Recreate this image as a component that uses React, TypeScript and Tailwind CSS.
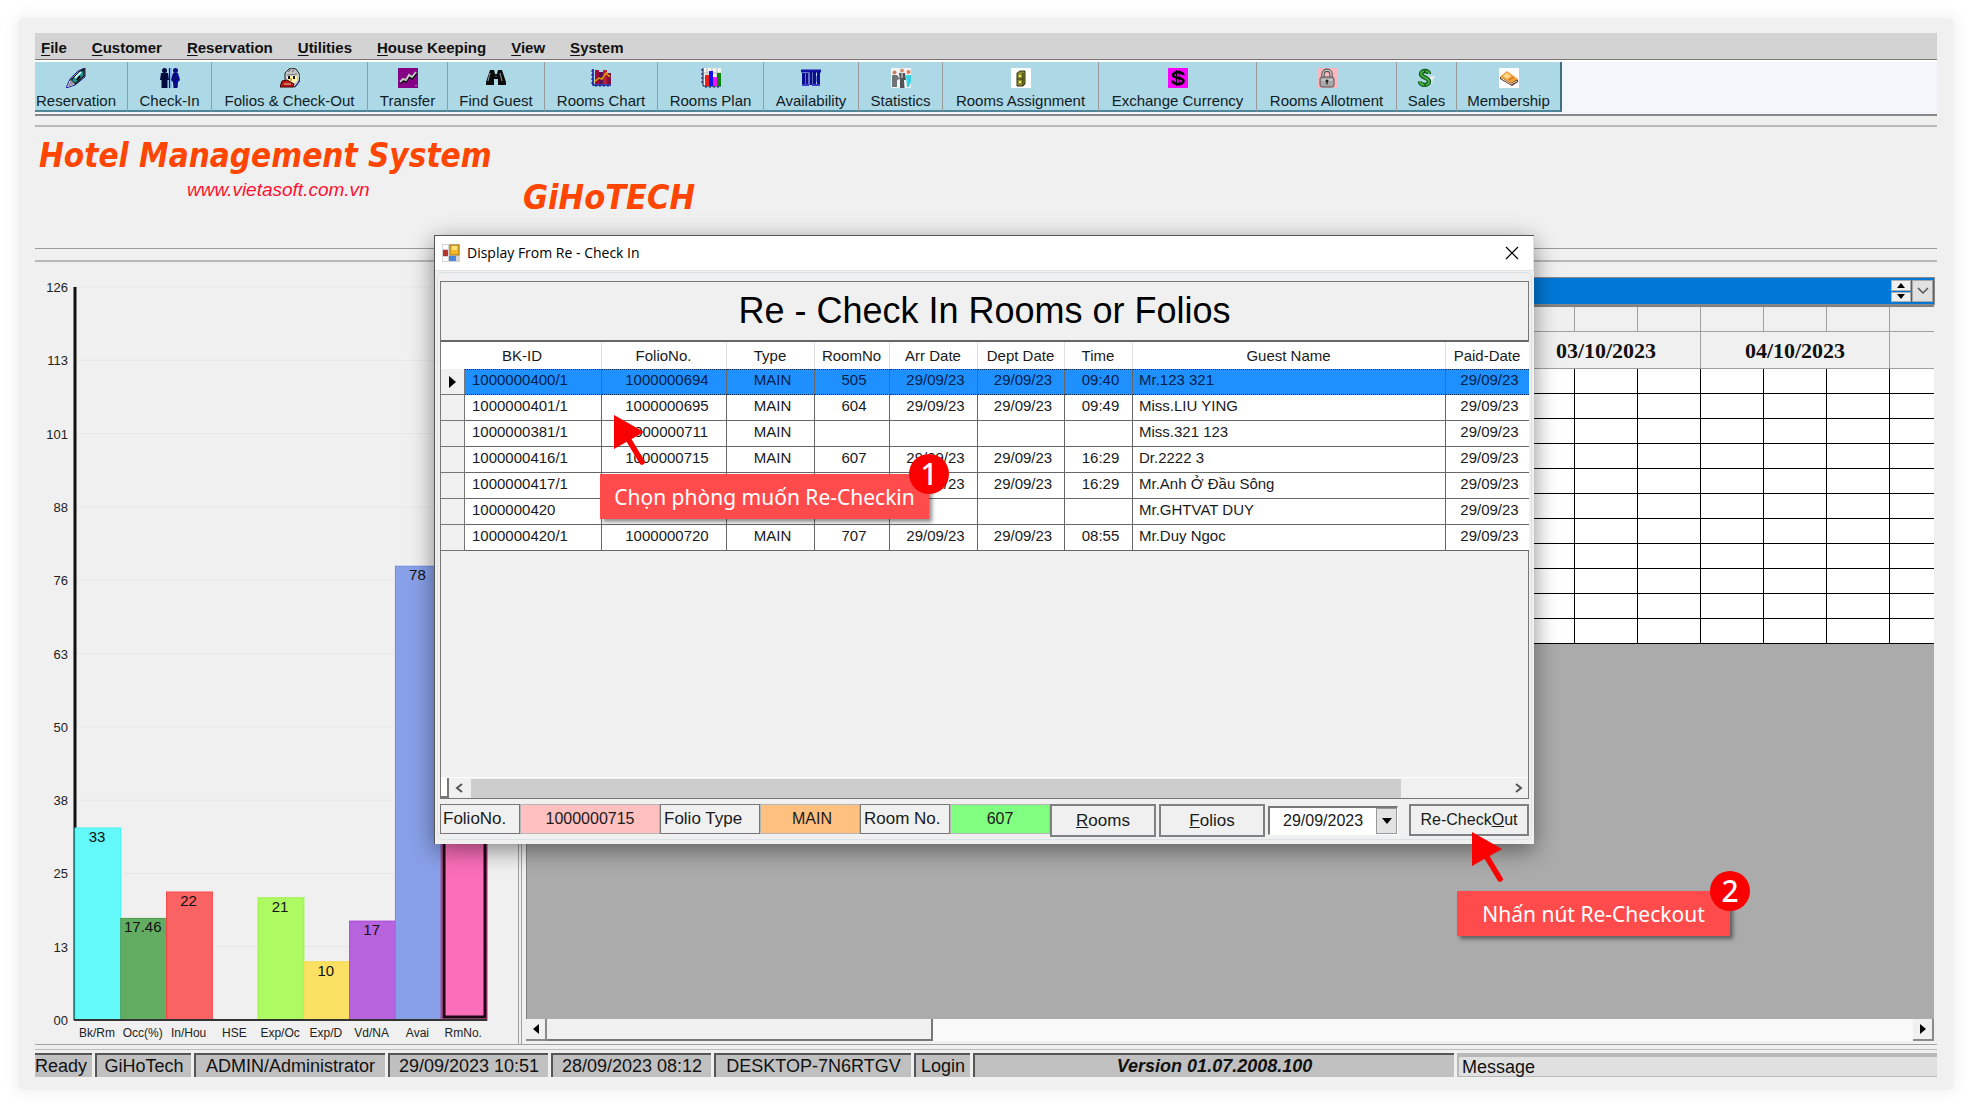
import React from "react";

type MenuEntry = { key: string; rest: string };

const menus: MenuEntry[] = [
  { key: "F", rest: "ile" },
  { key: "C", rest: "ustomer" },
  { key: "R", rest: "eservation" },
  { key: "U", rest: "tilities" },
  { key: "H", rest: "ouse Keeping" },
  { key: "V", rest: "iew" },
  { key: "S", rest: "ystem" },
];

const Pen = () => (
  <>
    <path d="M19 0 L19 9 L9 17 L6 18 L0 20 L4 11 L12 3 Z" fill="#fff" stroke="#1a1a9c" strokeWidth="1" />
    <path d="M18 1 L18 8 L9 16 L5 12 L13 4 Z" fill="#1f9494" stroke="#111" strokeWidth="1.500" />
    <path d="M15 4 L9 10" stroke="#c8ffff" strokeWidth="2" />
    <path d="M14 8 L11 12" stroke="#000" strokeWidth="2" />
    <path d="M5 12 L9 16 L1 19 Z" fill="#9898ac" />
  </>
);

const People = () => (
  <>
    <circle cx="4.500" cy="2.500" r="2.500" fill="#000a3c" />
    <path d="M1 5 H8 L9 12 H7.500 V20 H1.500 V12 H0 Z" fill="#000a3c" />
    <path d="M9.500 0 V20" stroke="#0606c8" strokeWidth="1.200" />
    <path d="M11 0 V20" stroke="#5f9ff0" strokeWidth="1" />
    <circle cx="15.500" cy="2.500" r="2.500" fill="#0a0a78" />
    <path d="M13 5 H18 L20 12 L18 14 L17.500 20 H13.500 L13 14 L11 12 Z" fill="#0a0a78" />
    <path d="M16 6 L19 10 M17 12 L15 17" stroke="#0808d8" strokeWidth="1" />
  </>
);

const Clerk = () => (
  <>
    <path d="M5 5 L10 0 L16 1 L20 7 L19 14 L15 19 L8 18 L5 13 Z" fill="#c9c9c9" stroke="#222" strokeWidth="1" />
    <path d="M8 4 L11 1 M12 4 L14 2 M7 7 L17 6" stroke="#777" strokeWidth="1.200" />
    <path d="M7 8 H17 V13 L12 17 L7 14 Z" fill="#fff3a8" />
    <rect x="8" y="8" width="2" height="3" fill="#111" />
    <rect x="13" y="8" width="2" height="3" fill="#111" />
    <path d="M11 10 V13" stroke="#b27300" />
    <path d="M0 19 L2 13 L7 12 L14 16 L13 19 Z" fill="#b81818" stroke="#400" strokeWidth="1" />
    <path d="M4 16 H11" stroke="#f4c0a0" />
    <path d="M15 19 L20 12" stroke="#1a1ab4" />
  </>
);

const TrendIcon = () => (
  <>
    <rect width="20" height="20" fill="#840084" />
    <path d="M2 15 L5 12 L8 13 L11 8 L14 10 L18 5" fill="none" stroke="#000" strokeWidth="3" />
    <path d="M2 14 L5 11 L8 12 L11 7 L14 9 L18 4" fill="none" stroke="#c8c8c8" strokeWidth="2" />
    <rect x="17" y="17" width="2" height="1" fill="#d070d0" />
  </>
);

const Binoculars = () => (
  <>
    <path d="M4 2 H8 L9 6 H11 L12 2 H16 L20 14 V17 H12 V11 H8 V17 H0 V14 Z" fill="#0c0c0c" />
    <path d="M4 5 L2 13 M14 5 L16 13" stroke="#8aa0a8" strokeWidth="1" />
    <path d="M9 8 H11" stroke="#456" />
  </>
);

const RoomsChart = () => (
  <>
    <path d="M2 1 V17 H20" fill="none" stroke="#101094" strokeWidth="1.500" />
    <path d="M0 3 H2 M0 7 H2 M0 11 H2 M0 15 H2 M5 17 V19 M9 17 V19 M13 17 V19 M17 17 V19" stroke="#101094" />
    <rect x="4" y="2" width="4" height="14" fill="#a00a38" />
    <rect x="8" y="4" width="4" height="12" fill="#5a0f5a" />
    <rect x="12" y="2" width="4" height="14" fill="#b81c3c" />
    <rect x="16" y="5" width="4" height="11" fill="#7a1040" />
    <path d="M3 14 L8 10 L11 11 L15 5 L19 9" fill="none" stroke="#d6a500" strokeWidth="1.500" />
  </>
);

const RoomsPlan = () => (
  <>
    <rect x="2" width="18" height="18" fill="#f4f4f4" />
    <path d="M6 0 V18 M11 0 V18 M16 0 V18 M2 5 H20 M2 10 H20" stroke="#b8b8b8" />
    <path d="M2 0 V18 H20" fill="none" stroke="#101050" />
    <path d="M0 2 H2 M0 6 H2 M0 10 H2 M0 14 H2 M5 18 V20 M9 18 V20 M13 18 V20 M17 18 V20" stroke="#101050" />
    <rect x="4" y="7" width="4" height="11" fill="#f01c1c" />
    <rect x="8" y="3" width="4" height="15" fill="#1010f0" />
    <rect x="12" y="9" width="4" height="9" fill="#f018f0" />
    <rect x="16" y="5" width="4" height="13" fill="#0a840a" />
  </>
);

const Availability = () => (
  <>
    <path d="M0 3 H20" stroke="#1212a8" strokeWidth="3" />
    <path d="M2.500 5 V17 M6 5 V17 M10 3 V17 M13.500 4 V17 M17.500 3 V17" stroke="#0c0c8c" strokeWidth="3" />
    <path d="M1 17 H8 M11 17 H19" stroke="#3c3cc8" strokeWidth="2" />
    <path d="M8 8 V16 M15.500 8 V14" stroke="#6a7ad0" />
  </>
);

const Statistics = () => (
  <>
    <rect width="20" height="20" fill="#f2f4f4" />
    <circle cx="3.500" cy="4.500" r="2" fill="#c88060" />
    <path d="M1 7 H6 L9 11 L6 12 V19 H1 Z" fill="#707478" />
    <circle cx="11" cy="2.500" r="2" fill="#d09070" />
    <path d="M8 5 H14 L15 12 H13 L13.500 20 H9 V12 Z" fill="#505458" />
    <circle cx="17.500" cy="4" r="2" fill="#e07850" />
    <path d="M15 7 H20 V14 L18 19 H16 Z" fill="#34d2e4" />
    <path d="M11 5 V10" stroke="#e8e8e8" />
  </>
);

const Cabinet = () => (
  <>
    <rect width="20" height="20" fill="#fff" />
    <path d="M6 5 L9 3 H14 V16 L12 18 H6 Z" fill="#8c8c30" stroke="#333310" strokeWidth="1" />
    <path d="M12 5 V18 M6 11 H12" stroke="#333310" />
    <path d="M8 8 H10 M8 14 H10" stroke="#f0f060" strokeWidth="2" />
  </>
);

const Exchange = () => (
  <>
    <rect width="20" height="20" fill="#ff00ff" />
    <path d="M15.500 7 C15 3.500 5 3 5 7 C5 11 15.500 9 15.500 13 C15.500 17.500 4.500 16.500 4.500 12.500" fill="none" stroke="#000" strokeWidth="2.600" />
    <path d="M8.500 2 V18 M11.500 2 V18" stroke="#000" strokeWidth="1.300" />
  </>
);

const Lock = () => (
  <>
    <rect width="20" height="20" fill="#ffb6bf" />
    <path d="M6 10 V6 C6 1 14 1 14 6 V10" fill="none" stroke="#555" strokeWidth="3.400" />
    <path d="M6 10 V6 C6 1 14 1 14 6 V10" fill="none" stroke="#d8d8d8" strokeWidth="1.200" />
    <rect x="3" y="9" width="14" height="10" rx="2" fill="#a8a8a8" stroke="#555" />
    <path d="M4.500 12 H15.500" stroke="#dcdcdc" />
    <circle cx="10" cy="13" r="1.500" fill="#222" />
    <path d="M10 13 V16.500" stroke="#222" strokeWidth="1.200" />
  </>
);

const Sales = () => (
  <>
    <path d="M9 9 L19 8 L16 11 L15 16 Z" fill="#e6eeee" />
    <path d="M12 6 C12 2 4 2 4 6 C4 10 12 9 12 13.500 C12 18 3 18 3 13.500" fill="none" stroke="#0f4d18" strokeWidth="4.400" />
    <path d="M12 6 C12 2 4 2 4 6 C4 10 12 9 12 13.500 C12 18 3 18 3 13.500" fill="none" stroke="#3fae3c" strokeWidth="2.200" />
    <path d="M8 1 V4 M8 16 V19" stroke="#1c6b22" strokeWidth="2" />
  </>
);

const Member = () => (
  <>
    <rect width="20" height="20" fill="#fff" />
    <path d="M1 9 L8 4 L19 12 V14 L13 18 L1 11 Z" fill="#5c3a2c" />
    <path d="M1 9 L8 3 L19 11 L12 15 Z" fill="#f0a23a" />
    <path d="M4 8 L8 5 L12 8 L8 11 Z" fill="#ffd890" />
    <path d="M10 12 L15 9" stroke="#d0601c" />
    <path d="M2 10 L12 16 L18 13" fill="none" stroke="#f4e0d0" />
  </>
);

const tools = [
  { label: "Reservation", width: "w-[93px] pr-[10px]", icon: <Pen /> },
  { label: "Check-In", width: "w-[84px]", icon: <People /> },
  { label: "Folios & Check-Out", width: "w-[156px]", icon: <Clerk /> },
  { label: "Transfer", width: "w-[80px]", icon: <TrendIcon /> },
  { label: "Find Guest", width: "w-[97px]", icon: <Binoculars /> },
  { label: "Rooms Chart", width: "w-[113px]", icon: <RoomsChart /> },
  { label: "Rooms Plan", width: "w-[106px]", icon: <RoomsPlan /> },
  { label: "Availability", width: "w-[95px]", icon: <Availability /> },
  { label: "Statistics", width: "w-[84px]", icon: <Statistics /> },
  { label: "Rooms Assignment", width: "w-[156px]", icon: <Cabinet /> },
  { label: "Exchange Currency", width: "w-[158px]", icon: <Exchange /> },
  { label: "Rooms Allotment", width: "w-[140px]", icon: <Lock /> },
  { label: "Sales", width: "w-[60px]", icon: <Sales /> },
  { label: "Membership", width: "w-[105px]", icon: <Member /> },
];

const bars = [
  { label: "Bk/Rm", value: 33, fill: "#64fafa", edge: "#3ef0f0" },
  { label: "Occ(%)", value: 17.46, fill: "#63ad63", edge: "#4a9c4a" },
  { label: "In/Hou", value: 22, fill: "#fb6464", edge: "#fa4444" },
  { label: "HSE", value: 0, fill: "none", edge: "none" },
  { label: "Exp/Oc", value: 21, fill: "#adfa62", edge: "#9af23c" },
  { label: "Exp/D", value: 10, fill: "#fae163", edge: "#f5d843" },
  { label: "Vd/NA", value: 17, fill: "#b863de", edge: "#a844d8" },
  { label: "Avai", value: 78, fill: "#88a0e8", edge: "#6f8be0" },
  { label: "RmNo.", value: 126, fill: "#fb6eb9", edge: "#c0207a" },
];

const ticks = ["126", "113", "101", "88", "76", "63", "50", "38", "25", "13", "00"];

function OccupancyChart() {
  const top = 25;
  const base = 758;
  const left = 40;
  const step = 412 / bars.length;
  return (
    <svg width="483" height="782" viewBox="0 0 483 782" className="block shrink-0" role="img" aria-label="Occupancy chart" fontFamily="'Liberation Sans', Arial, sans-serif">
      {ticks.map((t, i) => {
        const y = top + ((base - top) * i) / 10;
        return (
          <g key={t}>
            <line x1={left} x2="453" y1={y} y2={y} stroke="#e6e6e6" />
            <text x="33" y={y + 5} textAnchor="end" fontSize="13" fill="#222">{t}</text>
          </g>
        );
      })}
      <line x1="40" x2="40" y1={top} y2={base} stroke="#111" strokeWidth="3" />
      {bars.map((b, i) => {
        const h = (b.value / 126) * (base - top);
        const x = left + i * step;
        return (
          <g key={b.label}>
            {b.value > 0 && <rect x={x} y={base - h} width={step} height={h} fill={b.fill} stroke={b.edge} />}
            {b.value > 0 && b.value < 126 && (
              <text x={x + 22} y={base - h + 14} textAnchor="middle" fontSize="15" fill="#111">{b.value}</text>
            )}
            <text x={x + 22} y="775" textAnchor="middle" fontSize="12" fill="#222">{b.label}</text>
          </g>
        );
      })}
      <rect x="409" y={top} width="41" height={base - top - 3} fill="none" stroke="#1a0a14" strokeWidth="3" />
      <line x1="39" x2="452" y1={base} y2={base} stroke="#333" strokeWidth="2" />
    </svg>
  );
}

const slots = Array.from({ length: 11 }, (_, i) => i);
const dayParts = Array.from({ length: 21 }, (_, i) => i);

function Schedule() {
  return (
    <section className="flex min-w-0 flex-1 flex-col border-l border-[#a0a0a0] pl-1">
      <div className="mt-[15px] mr-[2px] flex h-7 items-center justify-end gap-px border border-[#8a8a8a] bg-[#0078d7] pr-px">
        <span className="flex h-[22px] w-5 flex-col gap-px">
          <button aria-label="Previous" className="flex flex-1 items-center justify-center border border-[#b0b0b0] bg-[#f0f0f0]">
            <svg width="8" height="5"><path d="M0 5 L4 0 L8 5 Z" /></svg>
          </button>
          <button aria-label="Next" className="flex flex-1 items-center justify-center border border-[#b0b0b0] bg-[#f0f0f0]">
            <svg width="8" height="5"><path d="M0 0 L4 5 L8 0 Z" /></svg>
          </button>
        </span>
        <button aria-label="Open list" className="flex h-[22px] w-[21px] items-center justify-center border border-[#a8a8a8] bg-[#e1e1e1]">
          <svg width="12" height="8"><path d="M1 1 L6 6 L11 1" fill="none" stroke="#555" strokeWidth="1.500" /></svg>
        </button>
      </div>
      <div className="mr-[3px] flex flex-1 flex-col overflow-hidden border-t-2 border-l border-[#808080] bg-[#ababab]">
        <table className="w-[1552px] table-fixed border-separate border-spacing-0 bg-white">
          <colgroup>
            <col className="w-[229px]" />
            {dayParts.map((d) => <col key={d} className="w-[63px]" />)}
          </colgroup>
          <thead className="bg-[#f0f0f0]">
            <tr>
              <th className="h-[25px] border-r border-b border-[#a0a0a0]" />
              {dayParts.map((d) => <th key={d} className="h-[25px] border-r border-b border-[#a0a0a0]" />)}
            </tr>
            <tr className="font-['Liberation_Serif',serif] text-[22px] leading-6 font-bold">
              <th className="h-[37px] border-r border-b border-[#a0a0a0]" />
              {["", "", "", "", "03/10/2023", "04/10/2023"].map((d, i) => (
                <th key={i} colSpan={3} className="border-r border-b border-[#a0a0a0] pt-[2px]">{d}</th>
              ))}
              <th colSpan={3} className="border-b border-[#a0a0a0] pt-[2px] text-[#ff9a1f]">05/10/2023</th>
            </tr>
          </thead>
          <tbody>
            {slots.map((s) => (
              <tr key={s}>
                <td className="h-[25px] border-r border-b border-black" />
                {dayParts.map((d) => <td key={d} className="border-r border-b border-black" />)}
              </tr>
            ))}
          </tbody>
        </table>
      </div>
      <div className="mr-[3px] mb-[3px] flex h-[22px] bg-[#f9f9f9]">
        <button aria-label="Scroll left" className="flex w-[21px] items-center justify-center border-r-2 border-b-2 border-[#8a8a8a] bg-[#f0f0f0]">
          <svg width="6" height="10"><path d="M6 0 L0 5 L6 10 Z" /></svg>
        </button>
        <div className="w-[386px] border-r-2 border-b-2 border-[#777] bg-[#f0f0f0]" />
        <div className="flex-1" />
        <button aria-label="Scroll right" className="flex w-[21px] items-center justify-center border-r-2 border-b-2 border-[#8a8a8a] bg-[#f0f0f0]">
          <svg width="6" height="10"><path d="M0 0 L6 5 L0 10 Z" /></svg>
        </button>
      </div>
    </section>
  );
}

const columns = [
  { title: "BK-ID", width: "w-[137px]" },
  { title: "FolioNo.", width: "w-[125px]" },
  { title: "Type", width: "w-[88px]" },
  { title: "RoomNo", width: "w-[75px]" },
  { title: "Arr Date", width: "w-[88px]" },
  { title: "Dept Date", width: "w-[87px]" },
  { title: "Time", width: "w-[68px]" },
  { title: "Guest Name", width: "w-[313px]" },
  { title: "Paid-Date", width: "w-[83px]" },
];

const D = "29/09/23";
const rows = [
  ["1000000400/1", "1000000694", "MAIN", "505", D, D, "09:40", "Mr.123 321", D],
  ["1000000401/1", "1000000695", "MAIN", "604", D, D, "09:49", "Miss.LIU YING", D],
  ["1000000381/1", "1000000711", "MAIN", "", "", "", "", "Miss.321 123", D],
  ["1000000416/1", "1000000715", "MAIN", "607", D, D, "16:29", "Dr.2222 3", D],
  ["1000000417/1", "", "", "", D, D, "16:29", "Mr.Anh Ở Đầu Sông", D],
  ["1000000420", "", "", "", "", "", "", "Mr.GHTVAT DUY", D],
  ["1000000420/1", "1000000720", "MAIN", "707", D, D, "08:55", "Mr.Duy Ngoc", D],
];

function cellAlign(i: number) {
  if (i === 0) return "pl-[7px] text-left";
  if (i === 7) return "pl-[6px] text-left";
  if (i === 1) return "pl-[6px] text-center";
  return "pl-1 text-center";
}

function CheckInDialog() {
  return (
    <div role="dialog" aria-label="Display From Re - Check In" className="absolute top-[235px] left-[434px] flex h-[609px] w-[1100px] flex-col border-t border-l border-[#555] bg-[#f0f0f0] shadow-[0_6px_22px_rgba(0,0,0,0.45)]">
      <div className="flex h-[35px] shrink-0 items-center border-r border-b border-[#dfe4e6] bg-white pr-[14px] pl-[7px]">
        <svg width="18" height="18" viewBox="0 0 18 18" aria-hidden="true">
          <rect width="18" height="18" fill="#d4d4d4" />
          <rect x="1" y="1" width="5" height="4" fill="#fff" />
          <rect x="1" y="13" width="5" height="4" fill="#fff" />
          <rect x="1" y="6" width="5" height="6" fill="#b8342c" />
          <rect x="8" y="1" width="9" height="10" fill="#f3b823" stroke="#a67712" />
          <rect x="10" y="2" width="5" height="4" fill="#fbe27c" />
          <rect x="7" y="12" width="7" height="5" fill="#4b86dc" />
        </svg>
        <h2 className="ml-[7px] flex-1 font-['Open_Sans',sans-serif] text-[14px] leading-5 text-black">Display From Re - Check In</h2>
        <button aria-label="Close">
          <svg width="14" height="14"><path d="M1 1 L13 13 M13 1 L1 13" stroke="#000" strokeWidth="1.200" /></svg>
        </button>
      </div>
      <div className="mx-[2px] mt-px mb-[4px] flex flex-1 flex-col rounded-md border border-[#d9e2e6] px-[2px] pt-2">
        <div className="flex flex-1 flex-col border border-[#777]">
          <h1 className="flex h-[60px] items-center justify-center border-b-2 border-[#666] text-[36px] leading-10 text-black">Re - Check In Rooms or Folios</h1>
          <table className="w-full table-fixed border-separate border-spacing-0 text-[15px] leading-5 text-[#1a1a1a]">
            <colgroup>
              <col className="w-[24px]" />
              {columns.map((c) => <col key={c.title} className={c.width} />)}
            </colgroup>
            <thead className="bg-white">
              <tr>
                <th aria-label="Row" className="h-[27px]" />
                {columns.map((c, i) => (
                  <th key={c.title} className={`font-normal whitespace-nowrap ${i < 8 ? "border-r border-[#e0e0e0]" : ""} ${i === 0 ? "pr-[22px]" : "pr-px"}`}>{c.title}</th>
                ))}
              </tr>
            </thead>
            <tbody>
              {rows.map((r, ri) => (
                <tr key={r[0]} className={ri === 0 ? "bg-[#1e90ff] text-[#06214a]" : "bg-white"}>
                  <th aria-label="Select row" className="h-[26px] border-r border-b border-[#777] bg-[#f0f0f0]">
                    {ri === 0 && <svg width="7" height="12" className="mx-auto"><path d="M0 0 L7 6 L0 12 Z" /></svg>}
                  </th>
                  {r.map((c, i) => (
                    <td key={i} className={`pb-1 whitespace-nowrap ${cellAlign(i)} ${i < 8 ? "border-r border-r-[#666]" : ""} ${ri === 0 ? "border-t border-b border-t-[#002a5c] border-b-[#002a5c] [border-bottom-style:dotted] [border-top-style:dotted]" : "border-b border-b-[#666]"}`}>{c}</td>
                  ))}
                </tr>
              ))}
            </tbody>
          </table>
          <div className="flex-1" />
          <div className="flex h-[21px] items-center border-t border-white">
            <div className="mr-[6px] h-full w-2 border-r-2 border-b-2 border-[#777] bg-white" />
            <button aria-label="Scroll left" className="w-4">
              <svg width="8" height="10"><path d="M7 1 L2 5 L7 9" fill="none" stroke="#555" strokeWidth="2" /></svg>
            </button>
            <div className="h-[19px] w-[930px] bg-[#cdcdcd]" />
            <div className="flex-1" />
            <button aria-label="Scroll right" className="mr-[5px]">
              <svg width="9" height="10"><path d="M2 1 L7 5 L2 9" fill="none" stroke="#555" strokeWidth="2" /></svg>
            </button>
          </div>
        </div>
        <div className="mt-[5px] mb-[2px] flex h-[33px] items-start text-[16px] leading-6 text-[#1a1a1a]">
          <label htmlFor="folio-no" className="flex h-[30px] w-[80px] items-center border border-[#777] pl-[2px] text-[17px]">FolioNo.</label>
          <input id="folio-no" readOnly value="1000000715" className="h-[30px] w-[140px] border border-[#b5b5b5] bg-[#ffc0c0] text-center text-[16px]" />
          <label htmlFor="folio-type" className="flex h-[30px] w-[100px] items-center border border-[#777] pl-[3px] text-[17px]">Folio Type</label>
          <input id="folio-type" readOnly value="MAIN" className="h-[30px] w-[100px] border border-[#b5b5b5] bg-[#ffc080] pl-1 text-center" />
          <label htmlFor="room-no" className="flex h-[30px] w-[90px] items-center border border-[#777] pl-[3px] text-[17px]">Room No.</label>
          <input id="room-no" readOnly value="607" className="h-[30px] w-[100px] border border-[#b5b5b5] bg-[#80ff80] text-center text-[16px]" />
          <button className="h-[33px] w-[106px] border-2 border-[#808080] text-[17px]"><u>R</u>ooms</button>
          <button className="ml-[3px] h-[33px] w-[106px] border-2 border-[#808080] text-[17px]"><u>F</u>olios</button>
          <span className="relative ml-[3px] mt-[2px] flex h-[29px] w-[130px] border-t-2 border-l-2 border-r border-b border-t-[#777] border-l-[#777] border-r-white border-b-white bg-white">
            <select aria-label="Date" className="w-full appearance-none pl-[13px] text-[16px]"><option>29/09/2023</option></select>
            <span className="pointer-events-none absolute top-0 right-0 flex h-[26px] w-[21px] items-center justify-center border border-[#999] bg-[#e3e3e3]">
              <svg width="10" height="6"><path d="M0 0 L5 6 L10 0 Z" /></svg>
            </span>
          </span>
          <button className="ml-[11px] h-8 w-[120px] border-2 border-[#808080] text-[16px] whitespace-nowrap">Re-Check<u>O</u>ut</button>
        </div>
      </div>
    </div>
  );
}

function Pointer() {
  return (
    <svg width="32" height="50" viewBox="0 0 32 50" aria-hidden="true">
      <path d="M0 0 L30 17 L0 34 Z" fill="#fb0000" />
      <path d="M13 22 L28 47" stroke="#fb0000" strokeWidth="5.500" strokeLinecap="round" />
    </svg>
  );
}

const statusCell = "flex h-full shrink-0 items-center border-t-2 border-l-2 border-[#555] bg-[#c0c0c0] whitespace-nowrap";

export default function App() {
  return (
    <div className="relative flex min-h-screen min-w-[1600px] flex-col bg-white p-[18px] font-['Liberation_Sans',Arial,sans-serif] text-[#111]">
      <div className="flex flex-1 flex-col rounded-md bg-[#f0f0f0] px-[17px] pt-[15px] pb-[13px] shadow-[0_0_14px_4px_rgba(0,0,0,0.05)]">
        <nav className="flex h-[27px] items-center gap-[25px] border-b border-[#777] bg-[#d3d3d3] pt-[3px] pl-[6px] text-[15px] leading-5 font-bold">
          {menus.map((m) => (
            <button key={m.key}><u className="underline-offset-2">{m.key}</u>{m.rest}</button>
          ))}
        </nav>
        <div className="flex h-[56px] border-t-2 border-b-2 border-t-white border-b-[#888] bg-[#f3f7fc] pb-[2px]">
          {tools.map((t) => (
            <button key={t.label} className={`flex shrink-0 flex-col items-center border-r border-b-2 border-r-[#9a9a9a] border-b-[#4f8596] bg-[#add8e6] pt-[6px] last:border-r-2 last:border-r-[#3f7080] ${t.width}`}>
              <svg width="20" height="20" viewBox="0 0 20 20" className="shrink-0" aria-hidden="true">{t.icon}</svg>
              <span className="mt-[3px] text-[15px] leading-5 whitespace-nowrap text-[#111c24]">{t.label}</span>
            </button>
          ))}
        </div>
        <header className="mt-[9px] flex h-[124px] items-start border-t-2 border-b border-t-[#b8b8b8] border-b-[#999] pl-1">
          <div className="w-[484px] pt-[9px]">
            <p className="font-['DejaVu_Sans_Condensed','DejaVu_Sans',sans-serif] text-[33px] leading-[40px] font-bold whitespace-nowrap text-[#ff4500] italic">Hotel Management System</p>
            <a href="#site" className="mt-[2px] ml-[148px] block text-[19px] leading-6 text-[#ff1030] italic">www.vietasoft.com.vn</a>
          </div>
          <p className="pt-[50px] font-['DejaVu_Sans_Condensed','DejaVu_Sans',sans-serif] text-[34px] leading-[40px] font-bold whitespace-nowrap text-[#ff4500] italic">GiHoTECH</p>
        </header>
        <main className="mt-[11px] flex flex-1 border-t-2 border-b border-t-[#b8b8b8] border-b-[#a0a0a0]">
          <aside className="mr-[2px] border-r border-[#a0a0a0]">
            <OccupancyChart />
          </aside>
          <Schedule />
        </main>
        <footer className="mt-1 flex h-7 gap-[3px] border-t border-[#bbb] pt-[3px] text-[18px] leading-5">
          <div className="flex w-[57px] shrink-0 items-center border-t-2 border-[#555] bg-[#c0c0c0]">Ready</div>
          <div className={`${statusCell} w-[96px] justify-center`}>GiHoTech</div>
          <div className={`${statusCell} w-[191px] justify-center`}>ADMIN/Administrator</div>
          <div className={`${statusCell} w-[160px] justify-center`}>29/09/2023 10:51</div>
          <div className={`${statusCell} w-[160px] justify-center`}>28/09/2023 08:12</div>
          <div className={`${statusCell} w-[197px] justify-center`}>DESKTOP-7N6RTGV</div>
          <div className={`${statusCell} w-[56px] justify-center`}>Login</div>
          <div className={`${statusCell} w-[481px] justify-center font-bold italic`}>Version 01.07.2008.100</div>
          <div className="flex min-w-0 flex-1 items-center border-t-4 border-b border-l-2 border-[#b8b8b8] bg-[#e0e0e0] pl-[3px]">Message</div>
        </footer>
      </div>

      <CheckInDialog />

      <div className="absolute top-[474px] left-[600px] flex h-[45px] w-[329px] items-center justify-center bg-[#ff4b4b] font-['Noto_Sans',sans-serif] text-[21px] leading-7 whitespace-nowrap text-white shadow-[3px_3px_4px_rgba(0,0,0,0.45)]">
        Chọn phòng muốn Re-Checkin
        <span className="absolute -top-5 -right-5 flex size-10 items-center justify-center rounded-full bg-[#fb0000] text-[30px] font-medium">1</span>
      </div>
      <div className="absolute top-[415px] left-[614px]"><Pointer /></div>

      <div className="absolute top-[891px] left-[1457px] flex h-[45px] w-[273px] items-center justify-center bg-[#ff4b4b] font-['Noto_Sans',sans-serif] text-[21px] leading-7 whitespace-nowrap text-white shadow-[3px_3px_4px_rgba(0,0,0,0.45)]">
        Nhấn nút Re-Checkout
        <span className="absolute -top-5 -right-5 flex size-10 items-center justify-center rounded-full bg-[#fb0000] text-[30px] font-medium">2</span>
      </div>
      <div className="absolute top-[832px] left-[1472px]"><Pointer /></div>
    </div>
  );
}
